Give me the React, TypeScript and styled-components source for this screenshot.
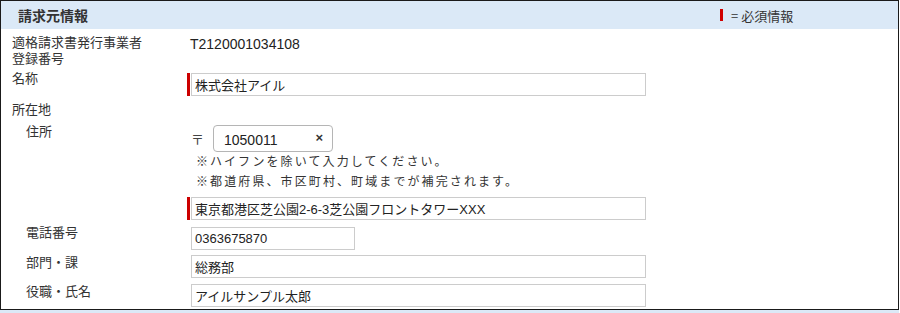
import styled, { createGlobalStyle } from 'styled-components';

const GlobalStyle = createGlobalStyle`
  body {
    margin: 0;
    background: #fff;
    font-family: "Liberation Sans", "Noto Sans CJK JP", sans-serif;
    color: #333;
  }
`;

interface FieldProps {
  value: string;
  required?: boolean;
  width?: number;
}

const Field = ({ value, required, width = 455 }: FieldProps) => (
  <FieldWrap>
    <RequiredMark $on={!!required} />
    <TextBox $width={width}>{value}</TextBox>
  </FieldWrap>
);

export default function App() {
  return (
    <>
      <GlobalStyle />
      <Panel>
        <Header>
          <Title>請求元情報</Title>
          <Legend>
            <LegendBar />= 必須情報
          </Legend>
        </Header>

        <Form>
          <Row>
            <Label>
              適格請求書発行事業者
              <br />
              登録番号
            </Label>
            <PlainValue>T2120001034108</PlainValue>
          </Row>

          <Row>
            <Label $lift>名称</Label>
            <Field value="株式会社アイル" required />
          </Row>

          <Row>
            <Label>所在地</Label>
          </Row>

          <Row>
            <Label $indent>住所</Label>
            <Stack>
              <ZipLine>
                <ZipMark>〒</ZipMark>
                <ZipBox>
                  <span>1050011</span>
                  <ClearButton aria-label="clear">×</ClearButton>
                </ZipBox>
              </ZipLine>
              <Notes>
                <div>※ハイフンを除いて入力してください。</div>
                <div>※都道府県、市区町村、町域までが補完されます。</div>
              </Notes>
              <Field value="東京都港区芝公園2-6-3芝公園フロントタワーXXX" required />
            </Stack>
          </Row>

          <Row $gap={7}>
            <Label $indent $lift>電話番号</Label>
            <Field value="0363675870" width={164} />
          </Row>

          <Row $gap={5}>
            <Label $indent>部門・課</Label>
            <Field value="総務部" />
          </Row>

          <Row>
            <Label $indent>役職・氏名</Label>
            <Field value="アイルサンプル太郎" />
          </Row>
        </Form>
      </Panel>
      <NextHeader />
    </>
  );
}

const Panel = styled.div`
  box-sizing: border-box;
  width: 899px;
  height: 310px;
  border: 1px solid #1a1a1a;
  display: flex;
  flex-direction: column;
`;

const Header = styled.div`
  height: 28px;
  background: #dbe9f7;
  display: flex;
  align-items: center;
  justify-content: space-between;
  padding: 0 0 0 17px;
`;

const Title = styled.h2`
  margin: 0;
  font-family: "Noto Sans CJK JP", sans-serif;
  font-size: 14px;
  font-weight: 700;
  color: #333;
`;

const Legend = styled.div`
  width: 178px;
  display: flex;
  align-items: center;
  gap: 8px;
  font-family: "Noto Sans CJK JP", sans-serif;
  font-size: 13px;
  color: #333;
`;

const LegendBar = styled.span`
  display: inline-block;
  width: 3px;
  height: 12px;
  background: #d00000;
`;

const Form = styled.div`
  display: flex;
  flex-direction: column;
  padding: 6px 0 0 11px;
`;

const Row = styled.div<{ $gap?: number }>`
  display: grid;
  grid-template-columns: 175px 1fr;
  align-items: start;
  margin-top: ${({ $gap }) => $gap ?? 6}px;

  &:first-child {
    margin-top: 0;
  }
`;

const Label = styled.div<{ $indent?: boolean; $lift?: boolean }>`
  padding-left: ${({ $indent }) => ($indent ? 14 : 0)}px;
  margin-top: ${({ $lift }) => ($lift ? -2 : 0)}px;
  font-family: "Liberation Sans", "Noto Sans CJK JP", sans-serif;
  font-size: 13px;
  line-height: 16px;
  color: #333;
`;

const PlainValue = styled.div`
  padding-left: 3px;
  padding-top: 1px;
  font-size: 14px;
  line-height: 16px;
  color: #222;
`;

const FieldWrap = styled.div`
  display: flex;
  align-items: stretch;
  gap: 1px;
`;

const RequiredMark = styled.span<{ $on: boolean }>`
  width: 3px;
  background: ${({ $on }) => ($on ? '#cc0000' : 'transparent')};
`;

const TextBox = styled.div<{ $width: number }>`
  box-sizing: border-box;
  width: ${({ $width }) => $width}px;
  height: 23px;
  border: 1px solid #cccccc;
  padding: 0 3px;
  display: flex;
  align-items: center;
  font-family: "Liberation Sans", "Noto Sans CJK JP", sans-serif;
  font-size: 13px;
  color: #222;
  white-space: nowrap;
`;

const Stack = styled.div`
  display: flex;
  flex-direction: column;
`;

const ZipLine = styled.div`
  display: flex;
  align-items: center;
  padding-left: 4px;
  margin-top: 1px;
`;

const ZipMark = styled.span`
  width: 22px;
  font-family: "Noto Sans CJK JP", sans-serif;
  font-size: 13px;
  color: #444;
`;

const ZipBox = styled.div`
  box-sizing: border-box;
  width: 120px;
  height: 27px;
  border: 1px solid #b5b5b5;
  border-radius: 4px;
  display: flex;
  align-items: center;
  justify-content: space-between;
  padding: 2px 9px 0 10px;
  font-size: 14px;
  color: #222;
`;

const ClearButton = styled.span`
  font-size: 13px;
  font-weight: 700;
  color: #333;
  margin-top: -4px;
`;

const Notes = styled.div`
  margin-top: -1px;
  margin-bottom: 6px;
  padding-left: 9px;
  font-family: "Noto Sans CJK JP", sans-serif;
  font-size: 12px;
  line-height: 20px;
  letter-spacing: 2.1px;
  color: #333;
`;

const NextHeader = styled.div`
  width: 899px;
  height: 3px;
  background: #dbe9f7;
`;
